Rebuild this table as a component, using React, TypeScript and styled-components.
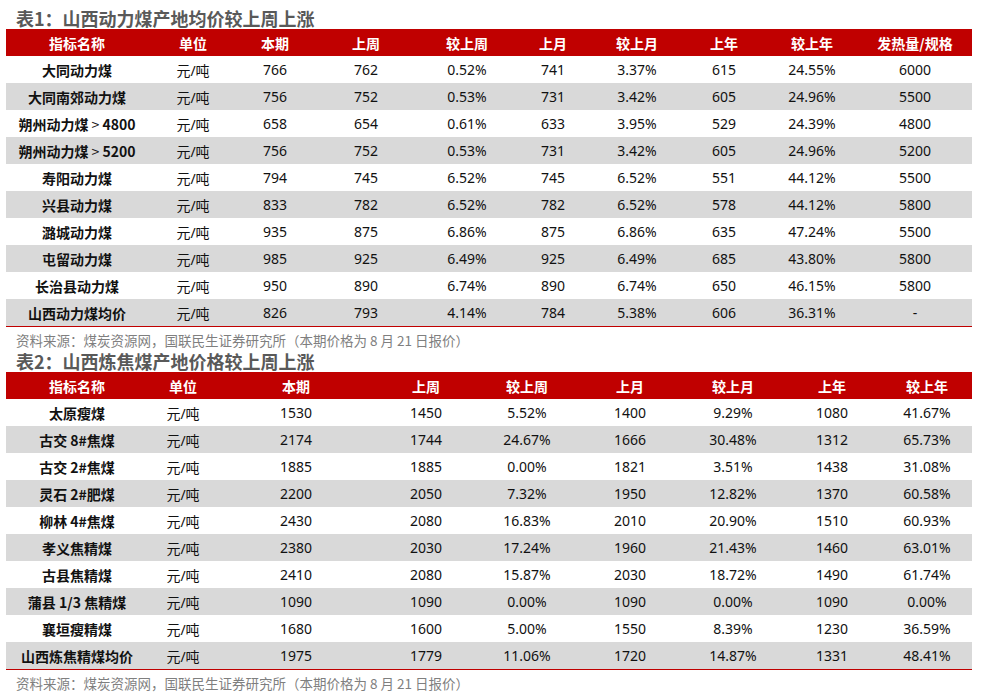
import styled, { createGlobalStyle } from 'styled-components';

const GlobalStyle = createGlobalStyle`
    html, body {
        margin: 0;
        padding: 0;
        background: #ffffff;
    }
    body {
        font-family: "Noto Sans", "Noto Sans CJK SC", sans-serif;
    }
`;

const Page = styled.div`
    width: 981px;
    padding: 7px 9px 0 6px;
    box-sizing: border-box;
`;

const Title = styled.h2`
    margin: 0;
    height: 22px;
    line-height: 22px;
    padding-left: 10px;
    font-size: 18px;
    font-weight: 700;
    color: #595959;
    font-family: "Noto Sans CJK SC", sans-serif;
`;

const Source = styled.p`
    margin: 0;
    height: 23px;
    line-height: 26px;
    padding-left: 10px;
    font-size: 13.5px;
    color: #7f7f7f;
    font-family: "Noto Sans CJK SC", sans-serif;
`;

const Table = styled.table`
    width: 966px;
    border-collapse: collapse;
    table-layout: fixed;
    border-bottom: 1.5px solid #c00000;
`;

const HeadCell = styled.th`
    height: 27px;
    padding: 0;
    background: #c00000;
    color: #ffffff;
    font-size: 14px;
    font-weight: 700;
    text-align: center;
    font-family: "Noto Sans CJK SC", sans-serif;
`;

const Row = styled.tr<{ $shaded: boolean }>`
    background: ${props => (props.$shaded ? '#d9d9d9' : '#ffffff')};
`;

const Cell = styled.td<{ $name?: boolean }>`
    height: 27px;
    padding: 0;
    font-size: 14px;
    text-align: center;
    color: #111111;
    white-space: nowrap;
    font-weight: ${props => (props.$name ? 700 : 400)};
    font-family: ${props => (props.$name ? '"Noto Sans CJK SC", sans-serif' : '"Noto Sans", "Noto Sans CJK SC", sans-serif')};
`;

const Light = styled.span`
    font-weight: 400;
`;

interface TableData {
    widths: number[];
    head: string[];
    rows: string[][];
}

const table1: TableData = {
    widths: [142, 90, 74, 108, 94, 78, 90, 84, 92, 114],
    head: ['指标名称', '单位', '本期', '上周', '较上周', '上月', '较上月', '上年', '较上年', '发热量/规格'],
    rows: [
        ['大同动力煤', '元/吨', '766', '762', '0.52%', '741', '3.37%', '615', '24.55%', '6000'],
        ['大同南郊动力煤', '元/吨', '756', '752', '0.53%', '731', '3.42%', '605', '24.96%', '5500'],
        ['朔州动力煤 > 4800', '元/吨', '658', '654', '0.61%', '633', '3.95%', '529', '24.39%', '4800'],
        ['朔州动力煤 > 5200', '元/吨', '756', '752', '0.53%', '731', '3.42%', '605', '24.96%', '5200'],
        ['寿阳动力煤', '元/吨', '794', '745', '6.52%', '745', '6.52%', '551', '44.12%', '5500'],
        ['兴县动力煤', '元/吨', '833', '782', '6.52%', '782', '6.52%', '578', '44.12%', '5800'],
        ['潞城动力煤', '元/吨', '935', '875', '6.86%', '875', '6.86%', '635', '47.24%', '5500'],
        ['屯留动力煤', '元/吨', '985', '925', '6.49%', '925', '6.49%', '685', '43.80%', '5800'],
        ['长治县动力煤', '元/吨', '950', '890', '6.74%', '890', '6.74%', '650', '46.15%', '5800'],
        ['山西动力煤均价', '元/吨', '826', '793', '4.14%', '784', '5.38%', '606', '36.31%', '-'],
    ],
};

const table2: TableData = {
    widths: [142, 70, 156, 104, 98, 108, 98, 100, 90],
    head: ['指标名称', '单位', '本期', '上周', '较上周', '上月', '较上月', '上年', '较上年'],
    rows: [
        ['太原瘦煤', '元/吨', '1530', '1450', '5.52%', '1400', '9.29%', '1080', '41.67%'],
        ['古交 8#焦煤', '元/吨', '2174', '1744', '24.67%', '1666', '30.48%', '1312', '65.73%'],
        ['古交 2#焦煤', '元/吨', '1885', '1885', '0.00%', '1821', '3.51%', '1438', '31.08%'],
        ['灵石 2#肥煤', '元/吨', '2200', '2050', '7.32%', '1950', '12.82%', '1370', '60.58%'],
        ['柳林 4#焦煤', '元/吨', '2430', '2080', '16.83%', '2010', '20.90%', '1510', '60.93%'],
        ['孝义焦精煤', '元/吨', '2380', '2030', '17.24%', '1960', '21.43%', '1460', '63.01%'],
        ['古县焦精煤', '元/吨', '2410', '2080', '15.87%', '2030', '18.72%', '1490', '61.74%'],
        ['蒲县 1/3 焦精煤', '元/吨', '1090', '1090', '0.00%', '1090', '0.00%', '1090', '0.00%'],
        ['襄垣瘦精煤', '元/吨', '1680', '1600', '5.00%', '1550', '8.39%', '1230', '36.59%'],
        ['山西炼焦精煤均价', '元/吨', '1975', '1779', '11.06%', '1720', '14.87%', '1331', '48.41%'],
    ],
};

function NameText({ text }: { text: string }) {
    const parts = text.split(' > ');
    if (parts.length < 2) return <>{text}</>;
    return (
        <>
            {parts[0]}
            <Light> &gt; </Light>
            {parts[1]}
        </>
    );
}

function PriceTable({ data }: { data: TableData }) {
    return (
        <Table>
            <colgroup>
                {data.widths.map((w, i) => (
                    <col key={i} style={{ width: w }} />
                ))}
            </colgroup>
            <thead>
                <tr>
                    {data.head.map(h => (
                        <HeadCell key={h}>{h}</HeadCell>
                    ))}
                </tr>
            </thead>
            <tbody>
                {data.rows.map((row, r) => (
                    <Row key={row[0]} $shaded={r % 2 === 1}>
                        {row.map((v, c) =>
                            c === 0 ? (
                                <Cell key={c} $name>
                                    <NameText text={v} />
                                </Cell>
                            ) : (
                                <Cell key={c}>{v}</Cell>
                            )
                        )}
                    </Row>
                ))}
            </tbody>
        </Table>
    );
}

const SOURCE = '资料来源：煤炭资源网，国联民生证券研究所（本期价格为 8 月 21 日报价）';

export default function App() {
    return (
        <Page>
            <GlobalStyle />
            <Title>表1：山西动力煤产地均价较上周上涨</Title>
            <PriceTable data={table1} />
            <Source>{SOURCE}</Source>
            <Title>表2：山西炼焦煤产地价格较上周上涨</Title>
            <PriceTable data={table2} />
            <Source>{SOURCE}</Source>
        </Page>
    );
}
